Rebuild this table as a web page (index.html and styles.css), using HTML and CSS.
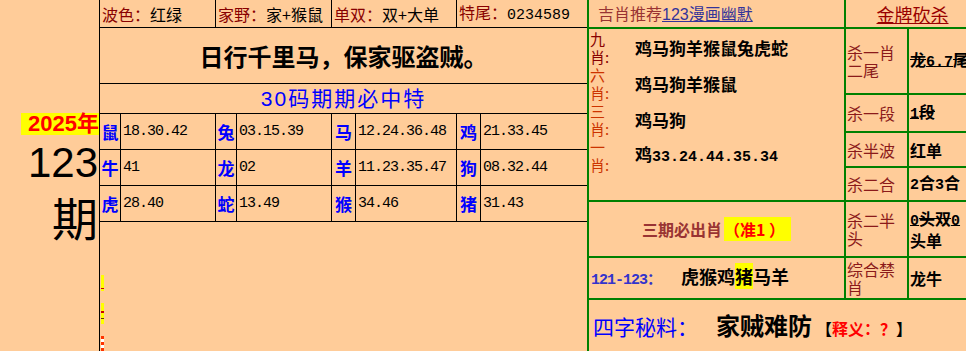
FILE: index.html
```html
<!DOCTYPE html>
<html lang="zh">
<head>
<meta charset="utf-8">
<title>123期</title>
<link rel="stylesheet" href="styles.css">
</head>
<body>
<div class="page">
  <div class="issue">
    <div class="year">2025年</div>
    <div class="num">123</div>
    <div class="qi">期</div>
  </div>

  <div class="main">
    <table class="mt">
      <colgroup>
        <col class="cz1"><col class="cn1"><col class="cz2"><col class="cn2">
        <col class="cz3"><col class="cn3"><col class="cz4"><col class="cn4">
      </colgroup>
      <tr class="r-hd">
        <td colspan="2"><span class="k">波色：</span>红绿</td>
        <td colspan="2"><span class="k">家野：</span>家+猴鼠</td>
        <td colspan="2"><span class="k">单双：</span>双+大单</td>
        <td colspan="2"><span class="k">特尾：</span><span class="mono">0234589</span></td>
      </tr>
      <tr class="r-motto">
        <td colspan="8" class="motto">日行千里马，保家驱盗贼。</td>
      </tr>
      <tr class="r-title">
        <td colspan="8" class="title">30码期期必中特</td>
      </tr>
      <tr class="r-z">
        <td class="z">鼠</td><td class="n">18.30.42</td>
        <td class="z">兔</td><td class="n">03.15.39</td>
        <td class="z">马</td><td class="n">12.24.36.48</td>
        <td class="z">鸡</td><td class="n">21.33.45</td>
      </tr>
      <tr class="r-z">
        <td class="z">牛</td><td class="n">41</td>
        <td class="z">龙</td><td class="n">02</td>
        <td class="z">羊</td><td class="n">11.23.35.47</td>
        <td class="z">狗</td><td class="n">08.32.44</td>
      </tr>
      <tr class="r-z">
        <td class="z">虎</td><td class="n">28.40</td>
        <td class="z">蛇</td><td class="n">13.49</td>
        <td class="z">猴</td><td class="n">34.46</td>
        <td class="z">猪</td><td class="n">31.43</td>
      </tr>
      <tr class="r-empty">
        <td colspan="8" class="empty">
          <div class="marks">
            <i class="mk mk-y"></i>
            <i class="mk mk-y2"></i>
            <i class="mk mk-r"></i>
          </div>
        </td>
      </tr>
    </table>
  </div>

  <div class="side">
    <table class="st">
      <colgroup>
        <col class="cp"><col class="ck"><col class="cv">
      </colgroup>
      <tr class="s-hd">
        <td class="rec">吉肖推荐<u class="link">123漫画幽默</u></td>
        <td colspan="2" class="gold"><u>金牌砍杀</u></td>
      </tr>
      <tr class="s-r1">
        <td rowspan="4" class="picks">
          <div class="pk">
            <div class="pl pl-a">九肖:</div><div class="pv">鸡马狗羊猴鼠兔虎蛇</div>
            <div class="pl">六肖:</div><div class="pv">鸡马狗羊猴鼠</div>
            <div class="pl">三肖:</div><div class="pv">鸡马狗</div>
            <div class="pl">一肖:</div><div class="pv">鸡<span class="mono">33.24.44.35.34</span></div>
          </div>
        </td>
        <td class="kl">杀一肖二尾</td>
        <td class="kv del">龙<span class="mono">6.7</span>尾</td>
      </tr>
      <tr class="s-r2">
        <td class="kl">杀一段</td>
        <td class="kv del"><span class="mono">1</span>段</td>
      </tr>
      <tr class="s-r3">
        <td class="kl">杀半波</td>
        <td class="kv">红单</td>
      </tr>
      <tr class="s-r4">
        <td class="kl">杀二合</td>
        <td class="kv"><span class="mono">2</span>合<span class="mono">3</span>合</td>
      </tr>
      <tr class="s-r5">
        <td class="must">三期必出肖<span class="zhun">（准1 ）</span></td>
        <td class="kl">杀二半头</td>
        <td class="kv"><span class="del"><span class="mono">0</span>头双<span class="mono">0</span></span> 头单</td>
      </tr>
      <tr class="s-r6">
        <td class="range"><span class="rg">121-123：</span><span class="rz">虎猴鸡<span class="hl">猪</span>马羊</span></td>
        <td class="kl">综合禁肖</td>
        <td class="kv">龙牛</td>
      </tr>
      <tr class="s-r7">
        <td colspan="3" class="secret">
          <span class="sk">四字秘料：</span><span class="sw">家贼难防</span><span class="sx">【<span class="sr">释义：？</span>】</span>
        </td>
      </tr>
    </table>
  </div>
</div>
</body>
</html>
```

FILE: styles.css
```css
html, body {
  margin: 0;
  padding: 0;
}
body {
  background: #FFCC99;
  overflow: hidden;
  font-family: "Noto Sans CJK SC", sans-serif;
  color: #000;
}
.page {
  display: flex;
  width: 966px;
  height: 351px;
  overflow: hidden;
}

/* left issue column */
.issue {
  width: 99px;
  flex: none;
  box-sizing: border-box;
  padding-top: 113px;
  display: flex;
  flex-direction: column;
  align-items: flex-end;
}
.year {
  background: #FFFF00;
  color: #FF0000;
  font: bold 22px/22px "Liberation Sans", "Noto Sans CJK SC", sans-serif;
  padding-left: 7px;
  height: 22px;
}
.num {
  font: 42px/42px "Liberation Sans", sans-serif;
  margin-top: 7px;
  margin-right: 1px;
}
.qi {
  font: 46px/46px "Noto Sans CJK SC", sans-serif;
  margin-top: 9px;
  margin-right: 1px;
}

.mono {
  font-family: "Liberation Mono", monospace;
}

/* main table */
.main {
  width: 488px;
  flex: none;
}
.mt {
  border-collapse: collapse;
  table-layout: fixed;
  width: 488px;
}
.mt td {
  border: 1px solid #000;
  padding: 0;
  overflow: hidden;
  white-space: nowrap;
}
.mt tr.r-hd td {
  border-top: none;
}
.cz1 { width: 21px; }
.cn1 { width: 95px; }
.cz2 { width: 21px; }
.cn2 { width: 95px; }
.cz3 { width: 24px; }
.cn3 { width: 101px; }
.cz4 { width: 24px; }
.cn4 { width: 107px; }

.r-hd td {
  height: 27px;
  font-size: 16px;
  line-height: 20px;
  padding-left: 2px;
}
.r-hd .mono {
  font-size: 15px;
}
.k {
  color: #880000;
}
.motto {
  height: 55px;
  text-align: center;
  font-size: 24px;
  font-weight: bold;
  line-height: 28px;
}
.title {
  height: 29px;
  text-align: center;
  color: #0000FF;
  font: 21px/24px "Liberation Sans", "Noto Sans CJK SC", sans-serif;
  letter-spacing: 2px;
}
.r-z td {
  height: 35px;
}
.z {
  color: #0000FF;
  font-weight: bold;
  font-size: 17px;
  line-height: 20px;
  text-align: center;
}
.n {
  font: 15px/20px "Liberation Mono", monospace;
  letter-spacing: -1px;
  padding-left: 2px !important;
}
.empty {
  height: 130px;
  vertical-align: top;
}
.marks {
  display: flex;
  flex-direction: column;
  padding-top: 53px;
  padding-left: 1px;
  gap: 12px;
}
.mk {
  display: block;
  width: 3px;
}
.mk-y {
  height: 16px;
  background: linear-gradient(#FFFF00 0 80%, #CC0000 80% 90%, #FFFF00 90%);
}
.mk-y2 {
  height: 21px;
  background: linear-gradient(#FFFF00 0 40%, #CC0000 40% 48%, #FFFF00 48% 70%, #663300 70% 76%, #FFFF00 76%);
}
.mk-r {
  height: 20px;
  background: repeating-linear-gradient(#FF3300 0 3px, #FFFFFF 3px 6px);
}

/* side table */
.side {
  flex: none;
  width: 379px;
  overflow: hidden;
}
.st {
  border-collapse: collapse;
  table-layout: fixed;
  width: 386px;
}
.st td {
  border: 2px solid #008000;
  padding: 0;
  overflow: hidden;
}
.st tr.s-hd td {
  border-top: none;
}
.cp { width: 257px; }
.ck { width: 63px; }
.cv { width: 66px; }

.s-hd td {
  height: 27px;
}
.rec {
  color: #993333;
  font-size: 16px;
  line-height: 20px;
  padding-left: 9px !important;
  white-space: nowrap;
}
.link {
  color: #333399;
  font-family: "Liberation Sans", "Noto Sans CJK SC", sans-serif;
}
.gold {
  text-align: center;
  color: #990000;
  font-size: 18px;
  line-height: 22px;
  padding-left: 6px !important;
}
.s-r1 td.kl, .s-r1 td.kv { height: 64px; }
.s-r2 td { height: 36px; }
.s-r3 td { height: 33px; }
.s-r4 td { height: 32px; }
.s-r5 td { height: 54px; }
.s-r6 td { height: 40px; }
.s-r7 td { height: 52px; }

.picks {
  vertical-align: top;
}
.pk {
  display: grid;
  grid-template-columns: 18px 1fr;
  grid-auto-rows: 36px;
  padding-top: 1px;
}
.pl {
  color: #CC3300;
  font-size: 15px;
  line-height: 18px;
  width: 18px;
  word-break: break-all;
  padding-left: 1px;
}
.pl-a {
  color: #880000;
}
.pv {
  align-self: center;
  padding-left: 28px;
  font-size: 17px;
  font-weight: bold;
  line-height: 20px;
  white-space: nowrap;
}
.pv .mono {
  font-size: 15px;
}
.kl {
  color: #8B1A1A;
  font-size: 16px;
  line-height: 18px;
  padding-left: 1px !important;
}
.kv {
  font-size: 16px;
  font-weight: bold;
  line-height: 18px;
  padding-left: 1px !important;
  white-space: normal;
}
.kv .mono {
  font-size: 15px;
}
.del {
  text-decoration: line-through;
}
.must {
  color: #993333;
  font-size: 16px;
  font-weight: bold;
  line-height: 20px;
  padding-left: 53px !important;
  white-space: nowrap;
}
.zhun {
  background: #FFFF00;
  color: #FF0000;
  padding-right: 6px;
  margin-left: 2px;
}
.range {
  white-space: nowrap;
  padding-left: 2px !important;
}
.rg {
  color: #3333CC;
  font: bold 15px/20px "Liberation Mono", "Noto Sans CJK SC", monospace;
  letter-spacing: -1px;
}
.rz {
  font-size: 18px;
  font-weight: bold;
  line-height: 22px;
  margin-left: 20px;
}
.hl {
  background: #FFFF00;
}
.secret {
  white-space: nowrap;
  padding-left: 4px !important;
}
.sk {
  color: #0000FF;
  font-size: 21px;
  line-height: 26px;
}
.sw {
  font-size: 24px;
  font-weight: bold;
  line-height: 26px;
  margin-left: 18px;
}
.sx {
  font-size: 16px;
  font-weight: bold;
  margin-left: 4px;
}
.sr {
  color: #FF0000;
}
```
